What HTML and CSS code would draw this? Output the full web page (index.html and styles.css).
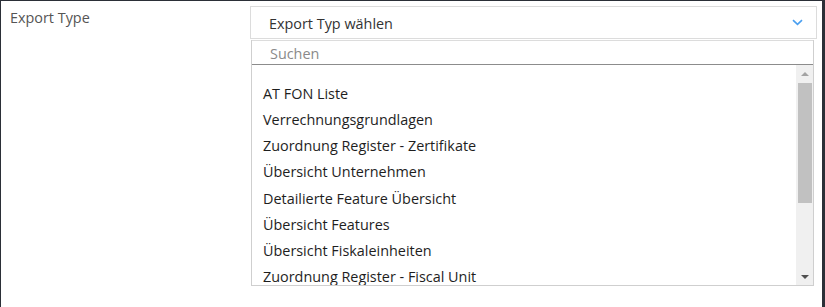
FILE: index.html
```html
<!DOCTYPE html>
<html lang="de">
<head>
<meta charset="UTF-8" />
<title>Export</title>
<link rel="stylesheet" href="styles.css">
</head>
<body>
<main class="frame">
  <div class="field">
    <label class="field-label">Export Type</label>

    <!-- ------ SELECT WITH OPEN DROPDOWN ------ -->
    <div class="select">
      <div class="select-box">
        <span class="select-value">Export Typ wählen</span>
        <svg class="chevron" width="11" height="7" viewBox="0 0 11 7">
          <path d="M1 1.2 L5.5 5.4 L10 1.2" fill="none" stroke="#4a9ff0" stroke-width="1.6"/>
        </svg>
      </div>

      <div class="dropdown">
        <input class="search" type="text" placeholder="Suchen">
        <div class="list-wrap">
          <ul class="options">
            <li>AT FON Liste</li>
            <li>Verrechnungsgrundlagen</li>
            <li>Zuordnung Register - Zertifikate</li>
            <li>Übersicht Unternehmen</li>
            <li>Detailierte Feature Übersicht</li>
            <li>Übersicht Features</li>
            <li>Übersicht Fiskaleinheiten</li>
            <li>Zuordnung Register - Fiscal Unit</li>
          </ul>
          <div class="scrollbar">
            <span class="arrow up"></span>
            <span class="thumb"></span>
            <span class="track"></span>
            <span class="arrow down"></span>
          </div>
        </div>
      </div>
    </div>
  </div>
</main>
</body>
</html>
```

FILE: styles.css
```css
/* ---------- Global ---------- */
:root {
  --font-ui: "Open Sans", "Noto Sans", Arial, sans-serif;
  --line: #dcdcdc;
}

html, body { height: 100%; }

body {
  margin: 0;
  background: #2b2f37;
  font-family: var(--font-ui);
  font-size: 14.4px;
  color: #1e1e1e;
}

.frame {
  margin: 1px 3px 0 1px;
  height: 306px;
  background: #fff;
  overflow: hidden;
}

/* ---------- Field row ---------- */
.field {
  display: flex;
  padding: 5px 5px 0 9px;
}
.field-label {
  width: 240px;
  flex: none;
  padding-top: 2px;
  color: #555;
  line-height: 20px;
}

.select { flex: 1; min-width: 0; }

.select-box {
  height: 31px;
  display: flex;
  align-items: center;
  justify-content: space-between;
  padding: 0 13px 0 18px;
  border: 1px solid var(--line);
  color: #333;
}
.select-value { padding-top: 2px; }
.chevron { margin-top: -1px; }

/* ----- Dropdown ----- */
.dropdown {
  margin: 1px 3px 0 1px;
  border: 1px solid #cfcfcf;
  border-top: 0;
}

.search {
  display: block;
  box-sizing: border-box;
  width: 100%;
  height: 25px;
  margin: 0;
  padding: 2px 0 0 18px;
  border: 0;
  border-top: 1px solid var(--line);
  border-bottom: 1px solid #8c8c8c;
  font: inherit;
  outline: none;
}
.search::placeholder { color: #8a8a8a; }

.list-wrap {
  display: flex;
  height: 220px;
}

.options {
  flex: 1;
  margin: 0;
  padding: 16px 0 0 11px;
  list-style: none;
  overflow: hidden;
}
.options li {
  line-height: 26.15px;
  white-space: nowrap;
}

/* ----- Fake scrollbar ----- */
.scrollbar {
  width: 17px;
  flex: none;
  display: flex;
  flex-direction: column;
  background: #f0f0f0;
}
.arrow {
  height: 17px;
  flex: none;
  display: flex;
  align-items: center;
  justify-content: center;
}
.arrow::before {
  content: "";
  border-left: 4px solid transparent;
  border-right: 4px solid transparent;
}
.arrow.up::before { border-bottom: 4px solid #a3a3a3; }
.arrow.down::before { border-top: 4px solid #505050; }

.thumb {
  height: 120px;
  margin: 1px 1px 0 2px;
  background: #c1c1c1;
}
.track { flex: 1; }
```
